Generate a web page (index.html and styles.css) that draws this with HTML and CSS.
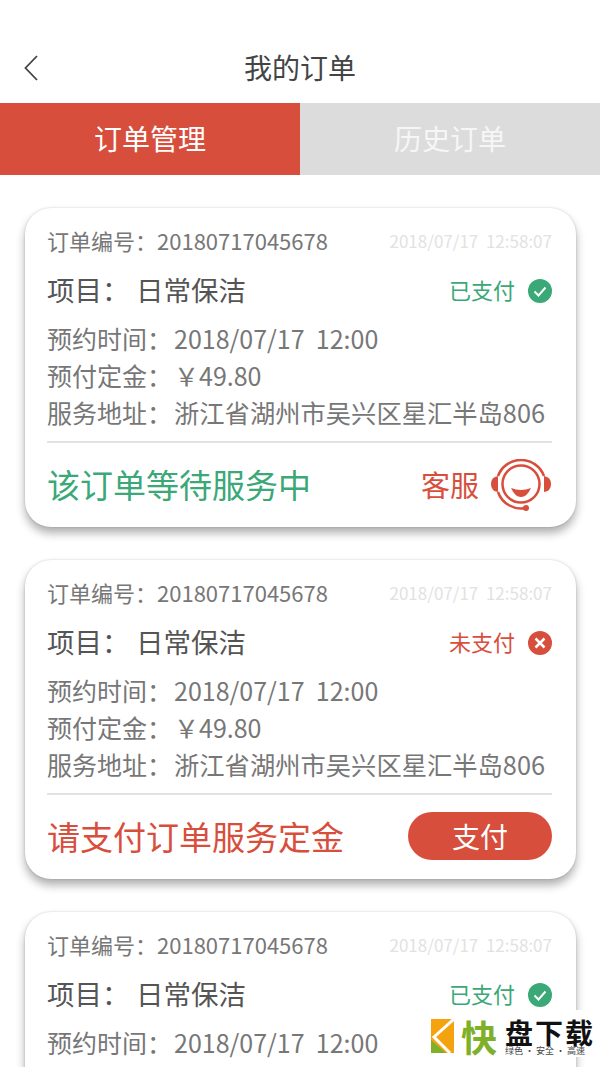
FILE: index.html
```html
<!DOCTYPE html>
<html lang="zh">
<head>
<meta charset="utf-8">
<title>我的订单</title>
<link rel="stylesheet" href="styles.css">
</head>
<body>
<div class="page">
	<header class="topbar">
		<svg class="back" width="16" height="28" viewBox="0 0 16 28"><path d="M14 2 L2.500 14 L14 26" fill="none" stroke="#444" stroke-width="1.800"/></svg>
		<h1>我的订单</h1>
	</header>
	<nav class="tabs">
		<div class="tab active">订单管理</div>
		<div class="tab">历史订单</div>
	</nav>
	<div class="list">

		<section class="card">
			<div class="row-top"><span class="orderno">订单编号：20180717045678</span><span class="stamp">2018/07/17&nbsp; 12:58:07</span></div>
			<div class="row-item">
				<span class="item"><span class="item-label">项目：</span>日常保洁</span>
				<span class="status green">已支付
					<svg width="24" height="24" viewBox="0 0 24 24"><circle cx="12" cy="12" r="12" fill="#3aa877"/><path d="M6.500 12.500 L10.500 16.500 L17.500 8.500" fill="none" stroke="#fff" stroke-width="2"/></svg>
				</span>
			</div>
			<div class="info"><span class="lbl">预约时间：</span>2018/07/17&nbsp; 12:00</div>
			<div class="info"><span class="lbl">预付定金：</span>￥49.80</div>
			<div class="info"><span class="lbl">服务地址：</span><span class="addr">浙江省湖州市吴兴区星汇半岛806</span></div>
			<div class="foot">
				<span class="note green">该订单等待服务中</span>
				<span class="service">客服
					<svg width="62" height="54" viewBox="0 0 62 54">
						<path d="M8 17 Q1 18 1 25 Q1 32 8 33 Z" fill="#d84e3d"/>
						<path d="M54 17 Q61 18 61 25 Q61 32 54 33 Z" fill="#d84e3d"/>
						<path d="M8 17 A24.500 24.500 0 0 1 54 17" fill="none" stroke="#d84e3d" stroke-width="2.500"/>
						<path d="M8 33 A24.500 24.500 0 0 0 36 49" fill="none" stroke="#d84e3d" stroke-width="2.500"/>
						<circle cx="31" cy="25" r="18.500" fill="none" stroke="#d84e3d" stroke-width="2.500"/>
						<path d="M21 29 Q31 33 41 29 Q37 38 31 38 Q25 38 21 29 Z" fill="#d84e3d"/>
						<circle cx="36" cy="49" r="3" fill="#d84e3d"/>
					</svg>
				</span>
			</div>
		</section>

		<section class="card">
			<div class="row-top"><span class="orderno">订单编号：20180717045678</span><span class="stamp">2018/07/17&nbsp; 12:58:07</span></div>
			<div class="row-item">
				<span class="item"><span class="item-label">项目：</span>日常保洁</span>
				<span class="status red">未支付
					<svg width="24" height="24" viewBox="0 0 24 24"><circle cx="12" cy="12" r="12" fill="#d84e3d"/><path d="M7.500 7.500 L16.500 16.500 M16.500 7.500 L7.500 16.500" fill="none" stroke="#fff" stroke-width="2.500"/></svg>
				</span>
			</div>
			<div class="info"><span class="lbl">预约时间：</span>2018/07/17&nbsp; 12:00</div>
			<div class="info"><span class="lbl">预付定金：</span>￥49.80</div>
			<div class="info"><span class="lbl">服务地址：</span><span class="addr">浙江省湖州市吴兴区星汇半岛806</span></div>
			<div class="foot">
				<span class="note red">请支付订单服务定金</span>
				<span class="paybtn">支付</span>
			</div>
		</section>

		<section class="card">
			<div class="row-top"><span class="orderno">订单编号：20180717045678</span><span class="stamp">2018/07/17&nbsp; 12:58:07</span></div>
			<div class="row-item">
				<span class="item"><span class="item-label">项目：</span>日常保洁</span>
				<span class="status green">已支付
					<svg width="24" height="24" viewBox="0 0 24 24"><circle cx="12" cy="12" r="12" fill="#3aa877"/><path d="M6.500 12.500 L10.500 16.500 L17.500 8.500" fill="none" stroke="#fff" stroke-width="2"/></svg>
				</span>
			</div>
			<div class="info"><span class="lbl">预约时间：</span>2018/07/17&nbsp; 12:00</div>
		</section>

	</div>

	<div class="watermark">
		<svg class="wm-logo" width="23" height="34" viewBox="0 0 23 34">
			<rect width="23" height="34" fill="#f5a20f"/>
			<path d="M0 21 L15 34 H0 Z" fill="#7fb02a"/>
			<path d="M23 0 L3 18 L19 34" fill="none" stroke="#fff" stroke-width="3"/>
		</svg>
		<span class="wm-kuai">快</span>
		<div class="wm-text">
			<div class="wm-big">盘下载</div>
			<div class="wm-small">绿色 · 安全 · 高速</div>
		</div>
	</div>
</div>
</body>
</html>
```

FILE: styles.css
```css
html, body {
	margin: 0;
	padding: 0;
	background: #fff;
}

.page {
	position: relative;
	width: 600px;
	height: 1067px;
	overflow: hidden;
	font-family: "Noto Sans CJK SC", "Noto Sans", sans-serif;
	color: #555;
}

/* header */
.topbar {
	position: relative;
	height: 103px;
	box-sizing: border-box;
	padding-top: 47px;
}
.topbar h1 {
	margin: 0;
	font-size: 28px;
	line-height: 40px;
	font-weight: 400;
	color: #444;
	text-align: center;
}
.back {
	position: absolute;
	left: 23px;
	top: 54px;
}

/* tabs */
.tabs {
	display: flex;
	height: 72px;
}
.tab {
	flex: 1;
	background: #dcdcdc;
	color: #f6f6f6;
	font-size: 28px;
	line-height: 70px;
	text-align: center;
}
.tab.active {
	background: #d84e3d;
	color: #fff;
}

/* cards */
.list {
	display: flex;
	flex-direction: column;
	gap: 33px;
	padding: 33px 24px 0 25px;
}
.card {
	box-sizing: border-box;
	height: 319px;
	flex: none;
	padding: 16px 24px 0 22px;
	background: #fff;
	border-radius: 26px;
	box-shadow: 0 0 2px rgba(0, 0, 0, 0.18), 0 6px 10px rgba(0, 0, 0, 0.32);
}
.row-top {
	display: flex;
	justify-content: space-between;
	align-items: center;
	height: 32px;
}
.orderno {
	font-size: 22px;
	color: #777;
}
.stamp {
	font-size: 17px;
	color: #e2e2e2;
}
.row-item {
	display: flex;
	justify-content: space-between;
	align-items: center;
	height: 38px;
	margin-top: 14px;
	margin-bottom: 12px;
}
.item {
	font-size: 27.500px;
	color: #555;
}
.item-label {
	display: inline-block;
	width: 89px;
}
.status {
	display: flex;
	align-items: center;
	gap: 13px;
	font-size: 22px;
}
.status svg {
	margin-top: 3px;
}
.info {
	height: 37px;
	line-height: 37px;
	font-size: 25px;
	color: #777;
	white-space: nowrap;
}
.lbl {
	display: inline-block;
	width: 127px;
}
.addr {
	font-size: 25.300px;
}
.foot {
	display: flex;
	justify-content: space-between;
	align-items: center;
	height: 82px;
	margin-top: 10px;
	padding-bottom: 2px;
	border-top: 2px solid #e2e2e2;
}
.note {
	font-size: 33px;
}
.green {
	color: #3aa877;
}
.red {
	color: #d84e3d;
}
.service {
	display: flex;
	align-items: center;
	gap: 11px;
	font-size: 29px;
	color: #d84e3d;
}
.service svg {
	margin-top: 4px;
}
.paybtn {
	width: 144px;
	height: 48px;
	border-radius: 24px;
	background: #d84e3d;
	color: #fff;
	font-size: 28px;
	line-height: 48px;
	text-align: center;
}

/* watermark over the corner */
.watermark {
	position: absolute;
	right: 0;
	bottom: 10px;
	width: 176px;
	height: 47px;
	display: flex;
	align-items: flex-start;
	padding: 9px 0 0 7px;
	box-sizing: border-box;
	background: #fff;
	color: #111;
}
.wm-kuai {
	font-size: 36px;
	line-height: 34px;
	font-weight: 700;
	color: #7fb02a;
	margin-left: 7px;
}
.wm-text {
	margin-left: 8px;
	margin-top: -1px;
}
.wm-big {
	font-size: 28px;
	line-height: 28px;
	font-weight: 700;
	letter-spacing: 2px;
	white-space: nowrap;
}
.wm-small {
	font-size: 9px;
	line-height: 10px;
	color: #444;
	white-space: nowrap;
}
```
